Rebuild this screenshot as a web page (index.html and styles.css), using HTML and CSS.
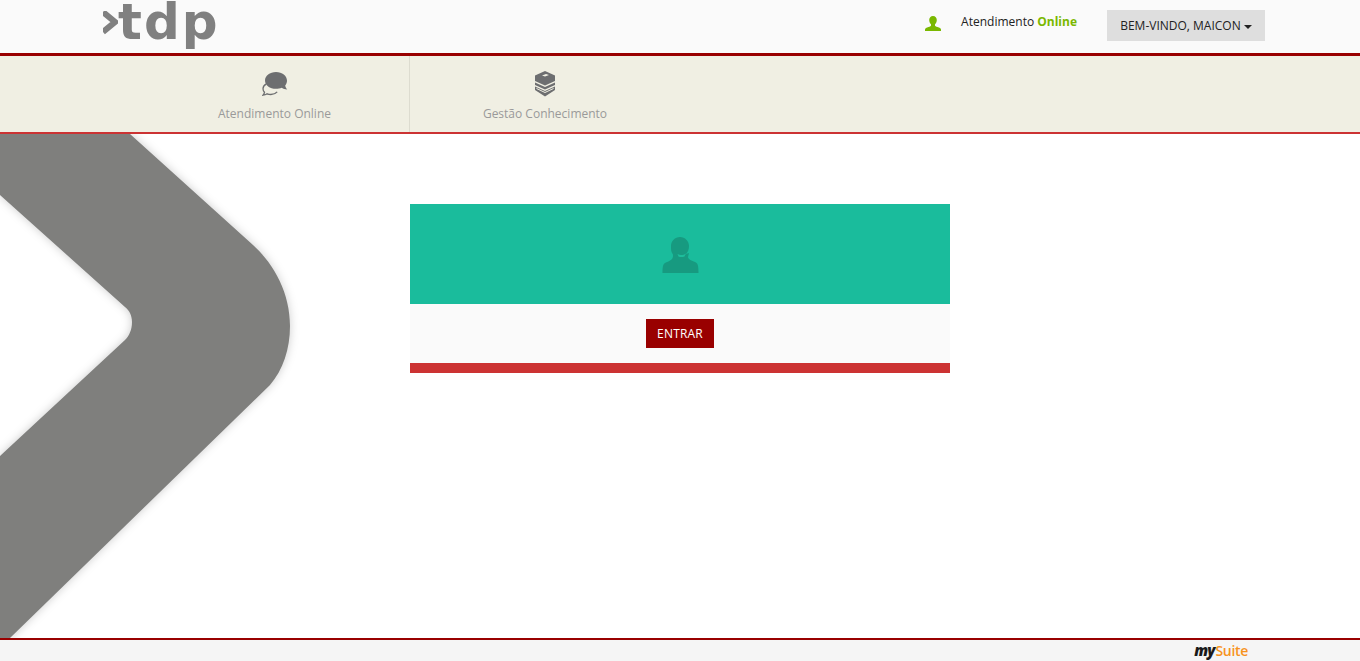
FILE: index.html
```html
<!DOCTYPE html>
<html lang="pt-BR">
<head>
<meta charset="utf-8">
<title>Atendimento Online</title>
<link rel="stylesheet" href="styles.css">
</head>
<body>
<div class="page">
  <header class="topbar">
    <div class="logo">
      <svg class="logo-mark" viewBox="0 0 15 24" width="15" height="24" aria-hidden="true"><path d="M0 1 L12 11 L0 21" fill="none" stroke="#808080" stroke-width="6"/></svg>
      <span class="logo-text">tdp</span>
    </div>
    <div class="status">
      <svg class="status-icon" viewBox="0 0 16 15" width="16" height="15" aria-hidden="true"><path d="M8 0c2.400 0 3.800 1.700 3.800 4 0 1.700-.8 3.300-1.800 4.200v1.300c0 .6 1 1 2.500 1.500 2 .7 3.500 1.200 3.500 2.600V15H0v-1.400c0-1.400 1.500-1.900 3.500-2.600C5 10.500 6 10.100 6 9.500V8.200C5 7.300 4.200 5.700 4.200 4 4.200 1.700 5.600 0 8 0z" fill="#7ab800"/></svg>
      <span class="status-text">Atendimento <strong class="status-on">Online</strong></span>
    </div>
    <button class="welcome" type="button">BEM-VINDO, MAICON <span class="caret"></span></button>
  </header>

  <nav class="mainnav">
    <a class="navitem navitem-sep" href="#">
      <svg class="navicon" viewBox="0 0 26 24" width="26" height="24" aria-hidden="true">
        <path d="M14 0C20.200 0 25 3.700 25 8.700c0 1.900-.7 3.500-1.800 4.800.2 1.300.8 2.600 2 4-2.200-.2-4-.8-5.400-1.800-1.800.8-3.700 1.100-5.800 1.100C7.800 16.800 3 13.300 3 8.500 3 3.700 7.800 0 14 0z" fill="#6d6e70"/>
        <path d="M4.400 11.900C2.300 13 1 14.800 1 16.800c0 1.400.6 2.600 1.500 3.500-.2 1-.7 2-1.500 2.900 1.700-.1 3-.6 4.100-1.400 1.200.5 2.500.7 3.800.7 2.600 0 4.900-1 6.300-2.600" fill="none" stroke="#6d6e70" stroke-width="1.300"/>
      </svg>
      <span class="navlabel">Atendimento Online</span>
    </a>
    <a class="navitem" href="#">
      <svg class="navicon" viewBox="0 0 22 26" width="22" height="26" aria-hidden="true">
        <path d="M11 0l10 4.500v5.500L11 14.500 1 10V4.500z" fill="#6d6e70"/>
        <path d="M8 4.500l4-1.500 3 1-4 1.600z" fill="#f0efe3"/>
        <path d="M1 11.500l10 4.500 10-4.500v2.500L11 18.500 1 14z" fill="#6d6e70"/>
        <path d="M1 15.500l10 4.500 10-4.500V19l-10 6.500L1 19z" fill="#6d6e70"/>
        <path d="M2.500 17.500L11 21.500l8.500-4" fill="none" stroke="#f0efe3" stroke-width="1"/>
      </svg>
      <span class="navlabel">Gestão Conhecimento</span>
    </a>
  </nav>

  <main class="content">
    <svg class="chevron" viewBox="0 0 320 504" width="320" height="504" aria-hidden="true">
      <path d="M0 0H130L253 111C275 131 290 160 290 192C290 215 283 236 270 251L10 504H0V322L125 206C129 202 132 196 132 188C132 181 129 176 125 173L0 61z" fill="#7f7f7d"/>
    </svg>
    <section class="card">
      <div class="card-head">
        <svg class="agent" viewBox="0 0 37 37" width="37" height="37" aria-hidden="true">
          <path d="M18 1C23 1 27 5 27 10C27 13 26 16 24 18L27 17L26 21C26 23 30 25 33 26C36 27 36.500 30 36.500 37H.5C.5 31 1 28 3 27C7 25 11 24 11 20C11 19 11 18 10 17C9 15 9 13 9 10C9 5 13 1 18 1z" fill="#179a80"/>
          <path d="M15.500 18C18 19.500 21 19.500 24 17.500L22.500 20.500C20.500 21.300 18 21.300 16.500 20.500z" fill="#1dbd9b"/>
        </svg>
      </div>
      <div class="card-body">
        <button class="enter" type="button">ENTRAR</button>
      </div>
    </section>
  </main>

  <footer class="footer">
    <span class="suite"><span class="suite-my">my</span><span class="suite-name">Suite</span></span>
  </footer>
</div>
</body>
</html>
```

FILE: styles.css
```css
* { box-sizing: border-box; }
html, body { margin: 0; height: 100%; }
body { font-family: "Open Sans", "Liberation Sans", sans-serif; background: #fff; overflow: hidden; }
.page { height: 661px; display: flex; flex-direction: column; }

.topbar {
  height: 56px;
  flex: none;
  display: flex;
  align-items: flex-start;
  background: #fafafa;
  border-bottom: 3px solid #990000;
  padding: 0 95px 0 103px;
}
.logo { display: flex; align-items: flex-start; height: 53px; }
.logo-mark { margin-top: 11px; flex: none; }
.logo-text {
  font-family: "DejaVu Sans", "Liberation Sans", sans-serif;
  font-size: 50px;
  font-weight: 700;
  line-height: 53px;
  letter-spacing: 2px;
  color: #808080;
  margin-top: -4px;
}
.status { margin-left: auto; display: flex; align-items: flex-start; padding-top: 16px; }
.status-icon { flex: none; }
.status-text { margin-left: 20px; margin-top: -3px; font-size: 12px; line-height: 18px; color: #222; }
.status-on { color: #7ab800; font-weight: 700; }
.welcome {
  margin: 10px 0 0 30px;
  width: 158px;
  height: 31px;
  border: 0;
  background: #dedede;
  color: #222;
  font-family: inherit;
  font-size: 12px;
  padding: 0;
}
.caret {
  display: inline-block;
  vertical-align: middle;
  border-top: 4px solid #222;
  border-left: 4px solid transparent;
  border-right: 4px solid transparent;
}

.mainnav {
  height: 78px;
  flex: none;
  display: flex;
  background: #f0efe3;
  border-bottom: 2px solid #cc3333;
  padding-left: 140px;
}
.navitem {
  width: 270px;
  display: flex;
  flex-direction: column;
  align-items: center;
  text-decoration: none;
  padding-top: 15px;
}
.navitem-sep { border-right: 1px solid #dddcd0; }
.navicon { height: 26px; flex: none; }
.navlabel { margin-top: 9px; font-size: 12px; line-height: 16px; color: #9a9a9a; }

.content { position: relative; flex: 1; min-height: 0; overflow: hidden; padding-top: 70px; }
.chevron {
  position: absolute;
  left: 0;
  top: 0;
  filter: drop-shadow(0 0 5px rgba(0, 0, 0, .2));
}
.card { position: relative; width: 540px; margin: 0 auto; }
.card-head { height: 100px; background: #1abc9c; display: flex; align-items: center; justify-content: center; }
.agent { margin-top: 1px; }
.card-body {
  height: 69px;
  background: #fafafa;
  border-bottom: 10px solid #cc3333;
  padding-top: 15px;
  display: flex;
  justify-content: center;
  align-items: flex-start;
}
.enter {
  width: 68px;
  height: 29px;
  border: 0;
  padding: 0;
  background: #990000;
  color: #fff;
  font-family: inherit;
  font-size: 12px;
  letter-spacing: .2px;
}

.footer {
  height: 23px;
  flex: none;
  background: #f5f5f5;
  border-top: 2px solid #990000;
  padding-right: 112px;
  display: flex;
  justify-content: flex-end;
  align-items: center;
}
.suite { display: flex; align-items: baseline; font-family: "Open Sans", sans-serif; font-weight: 700; line-height: 18px; }
.suite-my { font-size: 15px; font-style: italic; font-weight: 800; color: #1a1a1a; letter-spacing: -1px; }
.suite-name { font-size: 14px; font-weight: 600; color: #f7931e; margin-left: 1px; letter-spacing: -.3px; }
```
